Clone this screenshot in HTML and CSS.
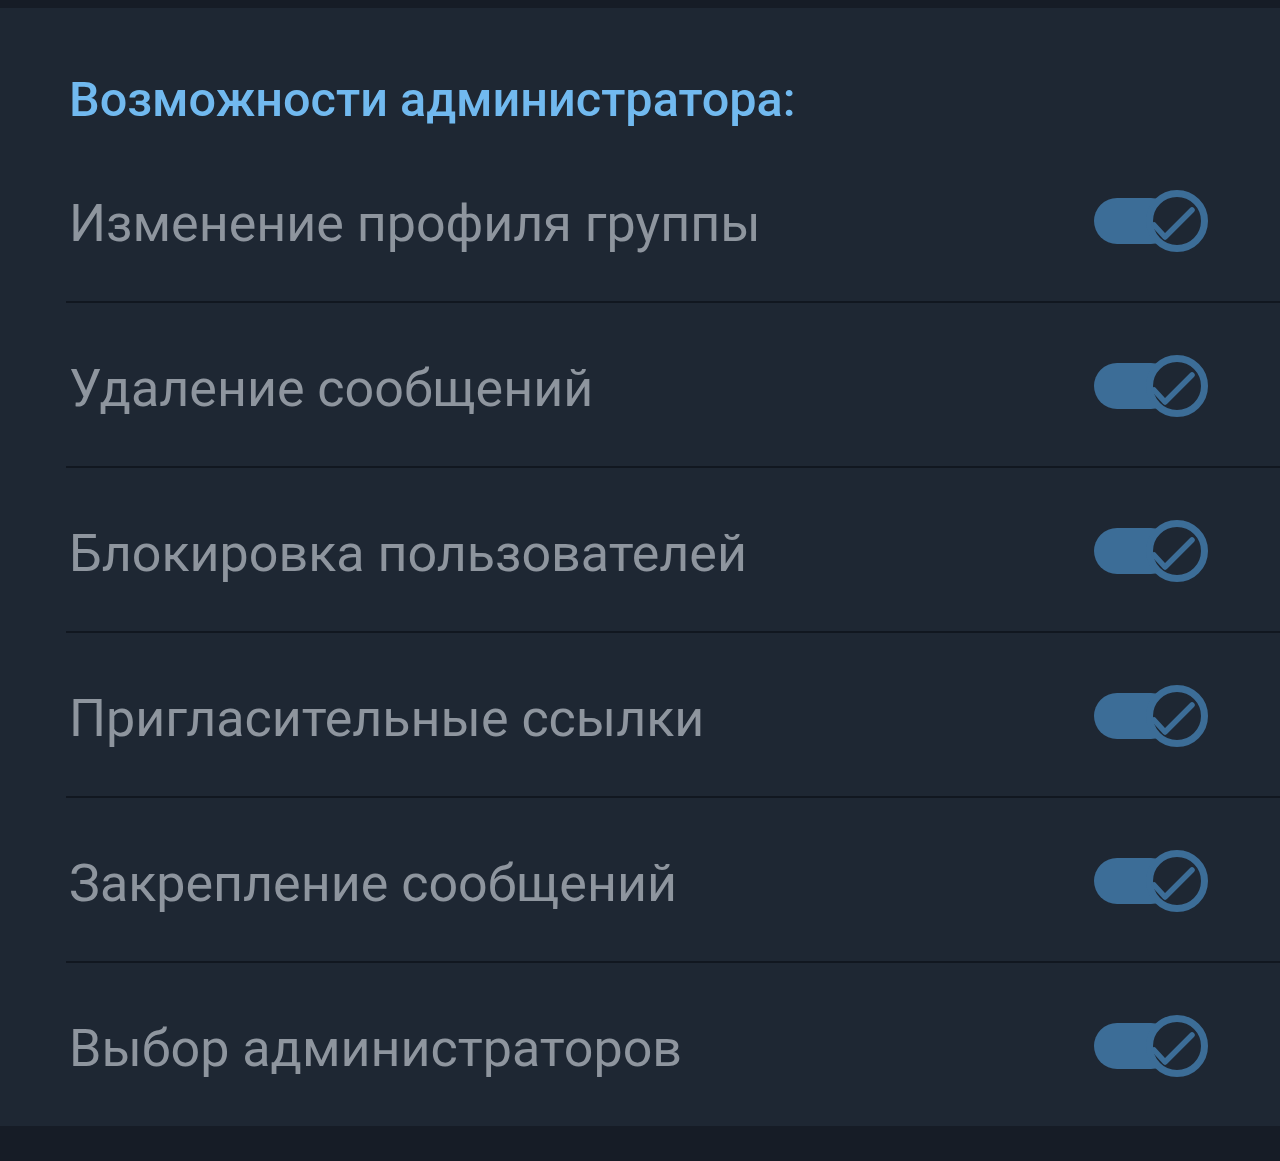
FILE: index.html
```html
<!DOCTYPE html>
<html lang="ru">
<head>
  <meta charset="UTF-8" />
  <meta name="viewport" content="width=device-width, initial-scale=1.0" />
  <title>Возможности администратора</title>
  <link rel="stylesheet" href="styles.css">
</head>
<body>
<div class="topbar"></div>
<div class="panel">
  <h2 class="panel-title">Возможности администратора:</h2>

  <div class="row">
    <span class="row-label">Изменение профиля группы</span>
    <svg class="toggle" viewBox="0 0 114 64" width="114" height="64"><rect x="0" y="9" width="80" height="46" rx="23"/><circle cx="83" cy="32" r="27.5"/><path d="M60 36 L71 48 L98 21"/></svg>
  </div>
  <div class="row">
    <span class="row-label">Удаление сообщений</span>
    <svg class="toggle" viewBox="0 0 114 64" width="114" height="64"><rect x="0" y="9" width="80" height="46" rx="23"/><circle cx="83" cy="32" r="27.5"/><path d="M60 36 L71 48 L98 21"/></svg>
  </div>
  <div class="row">
    <span class="row-label">Блокировка пользователей</span>
    <svg class="toggle" viewBox="0 0 114 64" width="114" height="64"><rect x="0" y="9" width="80" height="46" rx="23"/><circle cx="83" cy="32" r="27.5"/><path d="M60 36 L71 48 L98 21"/></svg>
  </div>
  <div class="row">
    <span class="row-label">Пригласительные ссылки</span>
    <svg class="toggle" viewBox="0 0 114 64" width="114" height="64"><rect x="0" y="9" width="80" height="46" rx="23"/><circle cx="83" cy="32" r="27.5"/><path d="M60 36 L71 48 L98 21"/></svg>
  </div>
  <div class="row">
    <span class="row-label">Закрепление сообщений</span>
    <svg class="toggle" viewBox="0 0 114 64" width="114" height="64"><rect x="0" y="9" width="80" height="46" rx="23"/><circle cx="83" cy="32" r="27.5"/><path d="M60 36 L71 48 L98 21"/></svg>
  </div>
  <div class="row">
    <span class="row-label">Выбор администраторов</span>
    <svg class="toggle" viewBox="0 0 114 64" width="114" height="64"><rect x="0" y="9" width="80" height="46" rx="23"/><circle cx="83" cy="32" r="27.5"/><path d="M60 36 L71 48 L98 21"/></svg>
  </div>
</div>
</body>
</html>
```

FILE: styles.css
```css
* { margin: 0; padding: 0; box-sizing: border-box; }
body {
  font-family: Roboto, 'Noto Sans', sans-serif;
  background: #161c26;
  min-height: 100vh;
}
.topbar { height: 8px; background: #161c26; }
.panel {
  background: #1e2733;
  padding-left: 66px;
}
.panel-title {
  font-size: 48.6px;
  font-weight: 500;
  line-height: 56px;
  color: #71b9ef;
  padding-top: 64px;
  padding-bottom: 10px;
  padding-left: 3px;
}
.row {
  height: 165px;
  display: flex;
  align-items: center;
  justify-content: space-between;
  padding-top: 8px;
  padding-right: 72px;
  border-bottom: 2px solid #111720;
}
.row:last-child { height: 163px; border-bottom: none; }
.row-label {
  font-size: 52px;
  color: #8e959e;
  line-height: 60px;
  padding-left: 3px;
}
.toggle { margin-bottom: 5px; }
.toggle rect { fill: #3c6d97; }
.toggle circle { fill: #1e2733; stroke: #3c6d97; stroke-width: 7; }
.toggle path {
  fill: none;
  stroke: #3c6d97;
  stroke-width: 5.5;
  stroke-linecap: round;
  stroke-linejoin: round;
}
```
